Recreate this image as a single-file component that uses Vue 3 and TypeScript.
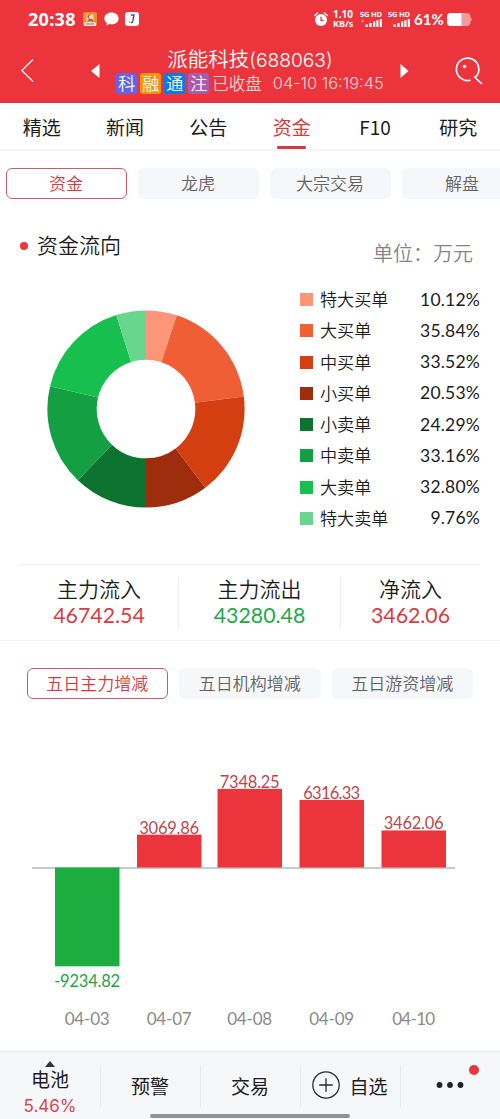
<script setup lang="ts">
interface Order { label: string; value: number; color: string }
interface Day { date: string; value: number; x: number }

const tabs = ['精选', '新闻', '公告', '资金', 'F10', '研究']
const subTabs = ['资金', '龙虎', '大宗交易', '解盘']
const badges = [
  { text: '科', tone: 'blue' },
  { text: '融', tone: 'orange' },
  { text: '通', tone: 'azure' },
  { text: '注', tone: 'violet' },
]

const orders: Order[] = [
  { label: '特大买单', value: 10.12, color: '#fd9579' },
  { label: '大买单', value: 35.84, color: '#f05e35' },
  { label: '中买单', value: 33.52, color: '#d33f11' },
  { label: '小买单', value: 20.53, color: '#9e2d0e' },
  { label: '小卖单', value: 24.29, color: '#0c7330' },
  { label: '中卖单', value: 33.16, color: '#139f42' },
  { label: '大卖单', value: 32.8, color: '#17bf4f' },
  { label: '特大卖单', value: 9.76, color: '#68d68c' },
]

const total = orders.reduce((sum, o) => sum + o.value, 0)
const point = (r: number, share: number) => {
  const a = share * Math.PI * 2
  return `${(99 + r * Math.sin(a)).toFixed(2)} ${(99 - r * Math.cos(a)).toFixed(2)}`
}
let start = 0
const slices = orders.map((o) => {
  const end = start + o.value / total
  const d = `M${point(98.6, start)}A98.6 98.6 0 0 1 ${point(98.6, end)}L${point(49.3, end)}A49.3 49.3 0 0 0 ${point(49.3, start)}Z`
  start = end
  return { d, color: o.color }
})

const summary = [
  { label: '主力流入', value: '46742.54', tone: 'up' },
  { label: '主力流出', value: '43280.48', tone: 'down' },
  { label: '净流入', value: '3462.06', tone: 'up' },
]
const ranges = ['五日主力增减', '五日机构增减', '五日游资增减']

const days: Day[] = [
  { date: '04-03', value: -9234.82, x: 55 },
  { date: '04-07', value: 3069.86, x: 137 },
  { date: '04-08', value: 7348.25, x: 217.5 },
  { date: '04-09', value: 6316.33, x: 299.5 },
  { date: '04-10', value: 3462.06, x: 381.5 },
]
const base = 167.5
const bars = days.map((d) => {
  const h = Math.abs(d.value) * 0.0107
  const up = d.value > 0
  const text = d.value.toFixed(2)
  return {
    ...d, h, up, text,
    y: up ? base - h : base,
    textY: up ? base - h - 1 : base + h + 21,
    textW: up ? (text.includes('31') ? 57 : 60) : 66,
  }
})
</script>

<template>
  <main class="screen">
    <header class="header">
      <div class="status">
        <span class="clock">20:38</span>
        <svg class="app-icon" width="14" height="14" viewBox="0 0 14 14">
          <rect width="14" height="14" rx="2" fill="#f58a32" />
          <path d="M3 2h8v8H3z" fill="#f5c47c" />
          <path d="M4 4l3-2 3 2-1 3 2 3H4l2-3z" fill="#b65a40" />
          <circle cx="8" cy="5" r="2" fill="#ffe1c0" />
          <path d="M1 11q6-3 12 0v3H1z" fill="#fff0df" />
          <path d="M3 12h8" stroke="#cc4438" />
        </svg>
        <svg class="chat-icon" width="15" height="14" viewBox="0 0 15 14">
          <path d="M7.5.5C3.4.5.4 3 .4 6.4c0 2 .9 3.6 2.5 4.7l-.5 2.5 3-1.5c5 1 9.200-1.600 9.200-5.700C14.600 3 11.600.5 7.500.5Z" fill="#fff" />
        </svg>
        <svg class="j-icon" width="14" height="14" viewBox="0 0 14 14">
          <rect width="14" height="14" rx="3" fill="#fff" />
          <path d="M6 3h3L7.800 9q-.4 2-2 1.500M4.500 9.500v1" fill="none" stroke="#8d383b" stroke-width="1.300" />
        </svg>
        <span class="spacer"></span>
        <svg class="alarm" width="14" height="15" viewBox="0 0 14 15">
          <circle cx="7" cy="8" r="6" fill="#fff" />
          <path d="M.7 3.500 3.600 1M13.300 3.500 10.400 1" stroke="#fff" stroke-width="1.400" stroke-linecap="round" />
          <path d="M7 4.800v3.500h2.700" fill="none" stroke="#eb343c" stroke-width="1.300" />
        </svg>
        <span class="speed"><span>1.10</span><span>KB/s</span></span>
        <span v-for="n in 2" :key="n" class="signal">
          <svg width="22" height="18" viewBox="0 0 22 18">
            <text x="0" y="7" textLength="22" class="net">5G HD</text>
            <path d="M5.500 14.500h2.300V17H5.500zM9.300 13h2.300v4H9.300zM13 11.500h2.300V17H13zM16.300 10.300h2.200V17h-2.200zM19.700 9h2.300v8h-2.300z" fill="#fff" />
            <path v-if="n === 1" d="M1.500 11h2.500M2.700 9.800v2.500" stroke="#f8a0a0" />
          </svg>
        </span>
        <span class="percent">61%</span>
        <svg class="battery" width="25" height="13" viewBox="0 0 25 13">
          <rect width="23.500" height="13" rx="4" fill="#f49a9d" />
          <path d="M4 0h10.500v13H4a4 4 0 0 1-4-4V4a4 4 0 0 1 4-4Z" fill="#fff" />
          <path d="M23.300 4.300c2 .8 2 3.600 0 4.400z" fill="#f49a9d" />
        </svg>
      </div>
      <div class="title-row">
        <svg class="back" width="15" height="25" viewBox="0 0 15 25"><path d="M13 1.500 1.800 12.500 13 23.500" fill="none" stroke="#fff" stroke-width="1.300" /></svg>
        <svg class="prev" width="9" height="14" viewBox="0 0 9 14"><path d="M8.500 0v14L0 7z" fill="#fff" /></svg>
        <div class="stock">
          <h1>派能科技<span>(688063)</span></h1>
          <div class="meta">
            <i v-for="b in badges" :key="b.text" class="badge" :class="b.tone">{{ b.text }}</i>
            <span class="closed">已收盘</span><time>04-10 16:19:45</time>
          </div>
        </div>
        <svg class="next" width="9" height="14" viewBox="0 0 9 14"><path d="M.5 0v14L8.500 7z" fill="#fff" /></svg>
        <svg class="search" width="28" height="29" viewBox="0 0 28 29">
          <path d="M15.500 23.200A11.200 11.200 0 1 1 20.200 20.600M19 19.500 27 27" fill="none" stroke="#fff" stroke-width="1.700" />
          <circle cx="9.500" cy="9.500" r="1.800" fill="#fff" />
        </svg>
      </div>
    </header>

    <nav class="tabs">
      <span v-for="t in tabs" :key="t" :class="{ active: t === '资金' }">{{ t }}</span>
    </nav>
    <nav class="sub-tabs">
      <span v-for="(t, i) in subTabs" :key="t" class="pill" :class="{ selected: i === 0 }">{{ t }}</span>
    </nav>

    <section class="flow">
      <div class="flow-head">
        <b class="dot"></b><h2>资金流向</h2><span class="unit">单位：万元</span>
      </div>
      <div class="flow-body">
        <svg class="donut" width="198" height="198" viewBox="0 0 198 198">
          <path v-for="s in slices" :key="s.color" :d="s.d" :fill="s.color" />
        </svg>
        <ul class="legend">
          <li v-for="o in orders" :key="o.label">
            <svg width="13" height="13"><rect width="13" height="13" :fill="o.color" /></svg>
            <span>{{ o.label }}</span><em>{{ o.value.toFixed(2) }}%</em>
          </li>
        </ul>
      </div>
    </section>

    <section class="summary">
      <div class="totals">
        <div v-for="s in summary" :key="s.label">
          <span>{{ s.label }}</span><strong :class="s.tone">{{ s.value }}</strong>
        </div>
      </div>
    </section>

    <nav class="ranges">
      <span v-for="(r, i) in ranges" :key="r" class="pill" :class="{ selected: i === 0 }">{{ r }}</span>
    </nav>
    <svg class="chart" width="500" height="352" viewBox="0 -1 500 352">
      <path d="M32 168H455" stroke="#b9b9b9" stroke-width="1.300" />
      <g v-for="b in bars" :key="b.date" text-anchor="middle">
        <rect :x="b.x" :y="b.y" width="64.500" :height="b.h" :fill="b.up ? '#eb343c' : '#1bad40'" />
        <text :x="b.x + 32.200" :y="b.textY" :textLength="b.textW" class="amount" :class="b.up ? 'rise' : 'fall'">{{ b.text }}</text>
        <text :x="b.x + 32.200" y="324.500" :textLength="b.date === '04-10' ? 43 : 45" class="date">{{ b.date }}</text>
      </g>
    </svg>

    <footer class="bottom">
      <div class="cell sector">
        <svg width="10" height="6" viewBox="0 0 10 6"><path d="M0 6 5 0l5 6z" fill="#333" /></svg>
        <span>电池</span><strong>5.46%</strong>
      </div>
      <div class="cell">预警</div>
      <div class="cell">交易</div>
      <div class="cell add">
        <svg width="28" height="28" viewBox="0 0 28 28"><circle cx="14" cy="14" r="13.200" /><path d="M14 7.200v13.600M7.200 14h13.600" /></svg>
        <span>自选</span>
      </div>
      <div class="cell more">
        <svg width="28" height="6" viewBox="0 0 28 6"><circle cx="3.500" cy="3" r="2.900" /><circle cx="14" cy="3" r="2.900" /><circle cx="24.500" cy="3" r="2.900" /></svg>
        <b class="notice"></b>
      </div>
      <i class="home-bar"></i>
    </footer>
  </main>
</template>

<style>
body { margin: 0; background: #fff; }
</style>

<style scoped>
* { box-sizing: border-box; }
svg { display: block; flex: none; }
.screen { width: 500px; height: 1119px; overflow: hidden; background: #fff; color: #1c1c1c; font-family: "Noto Sans CJK SC", sans-serif; font-weight: 350; }
h1, h2, ul { margin: 0; padding: 0; font-weight: 350; }
i, em { font-style: normal; }
.spacer { flex: 1; }
.header { height: 103px; background: #eb343c; color: #fff; border-bottom: 1px solid #d9363e; }
.status { display: flex; align-items: center; height: 38px; padding: 0 28px; }
.clock { width: 49px; margin-right: 6px; font: 700 18px/38px "Noto Sans", sans-serif; letter-spacing: .3px; white-space: nowrap; }
.app-icon { margin-right: 7px; }
.chat-icon { margin-right: 6px; }
.alarm { margin-right: 5px; }
.speed { display: flex; flex-direction: column; width: 22px; margin-right: 5px; font: 700 9px/10px "Noto Sans", sans-serif; white-space: nowrap; }
.speed span:first-child { font-size: 10px; }
.signal { margin-right: 4px; }
.signal:nth-of-type(4) { margin-right: 6px; }
.net { font: 700 7.500px "Noto Sans", sans-serif; fill: #fff; }
.percent { width: 30px; margin-right: 3px; font: 700 15px/41px Lato, sans-serif; white-space: nowrap; }
.battery { margin-top: 1px; }
.title-row { display: flex; height: 64px; padding: 0 17px 0 20px; }
.back { margin-top: 20px; }
.prev { margin: 26px 0 0 56px; }
.stock { width: 300px; display: flex; flex-direction: column; align-items: center; }
h1 { margin-top: 7px; font-size: 20.500px; line-height: 26px; white-space: nowrap; }
h1 span { font-family: Inter, sans-serif; font-size: 19.200px; font-weight: 350; }
.meta { display: flex; align-items: center; height: 22px; margin-top: -1px; white-space: nowrap; }
.badge { width: 21px; height: 21px; margin-right: 3px; border-radius: 3px; font-size: 17px; line-height: 20px; text-align: center; }
.blue { background: #6663e8; } .orange { background: #f1940c; } .azure { background: #087be9; } .violet { background: #aa5bb0; }
.closed { color: #ffd4d4; font-size: 16.500px; line-height: 20px; margin: -1px 0 0 0; }
time { color: #ffd4d4; margin-left: 11px; font: 350 16.400px/22px Inter, sans-serif; }
.next { margin: 26px 0 0 0; }
.search { margin: 19px 0 0 auto; }
.tabs { display: grid; grid-template-columns: repeat(6, 83.333px); height: 48px; border-bottom: 2px solid #f3f4f5; font-size: 19px; font-weight: 400; line-height: 48px; text-align: center; }
.tabs span { display: flex; flex-direction: column; align-items: center; height: 46px; }
.tabs .active { color: #d93841; }
.active::after { content: ""; width: 29px; height: 3px; margin-top: -5px; flex: none; border-radius: 1px; background: #d23b46; }
.sub-tabs { display: flex; gap: 11px; padding: 17px 0 0 5.500px; }
.pill { flex: none; width: 121px; height: 31px; border-radius: 6px; background: #f6f7f9; color: #626466; font-size: 17px; line-height: 29px; text-align: center; white-space: nowrap; }
.pill.selected { border: 1px solid #c65d68; background: #fff; color: #d63942; line-height: 27px; }
.flow { height: 365px; }
.flow-head { display: flex; align-items: center; height: 80px; padding: 13px 27px 0 20px; }
.dot { width: 8px; height: 8px; margin-right: 9px; border-radius: 50%; background: #eb343c; }
h2 { margin-top: -3px; font-size: 21px; line-height: 30px; }
.unit { margin: 14px 0 0 auto; color: #858585; font-size: 20px; line-height: 30px; }
.flow-body { display: flex; padding: 0 20px 0 47.400px; }
.donut { margin-top: 31px; }
.legend { width: 180px; margin: 5px 0 0 auto; list-style: none; }
.legend li { display: flex; align-items: center; height: 31.250px; font-size: 17.100px; }
.legend li span { margin: -2px 0 0 7px; }
em { margin-left: auto; font: 17.500px/30px Lato, sans-serif; letter-spacing: .2px; }
.summary { height: 77px; padding: 0 20px; border-bottom: 1px solid #f0f1f2; }
.totals { display: grid; grid-template-columns: 158px 162px 140px; border-top: 1px solid #eeeff0; padding-top: 12px; }
.totals div { display: flex; flex-direction: column; align-items: center; height: 51px; font-size: 21px; line-height: 23px; }
.totals div + div { border-left: 1px solid #ebecee; }
.totals strong { margin-top: 2px; font: 400 21.300px/26px Lato, sans-serif; }
.up { color: #d93a45; } .down { color: #1ea949; }
.ranges { display: flex; gap: 11px; padding: 27px 0 0 26.500px; }
.ranges .pill { width: 141.500px; }
.chart { font-family: Lato, sans-serif; font-weight: 400; }
.amount { font-size: 16.500px; } .rise { fill: #bd4650; } .fall { fill: #1ba543; }
.date { font-size: 17px; fill: #8a8a8a; }
.bottom { position: relative; display: grid; grid-template-columns: repeat(5, 100px); height: 68px; border-top: 1px solid #e6e7e8; background: #f6f7f9; font-size: 19px; font-weight: 400; }
.cell { display: flex; align-items: center; justify-content: center; height: 66px; position: relative; }
.cell:nth-child(-n+4)::after { content: ""; position: absolute; right: -1px; top: 13px; height: 43px; width: 1px; background: #e9ebee; }
.sector { flex-direction: column; justify-content: flex-start; padding-top: 9px; }
.sector span { line-height: 24px; }
.sector strong { color: #d64550; font: 400 17px/30px Inter, sans-serif; }
.add span { margin-left: 9px; }
.add svg { fill: none; stroke: #292b2e; stroke-width: 1.300; }
.more svg { fill: #222; }
.notice { position: absolute; left: 69px; top: 13px; width: 10px; height: 10px; border-radius: 50%; background: #eb343c; }
.home-bar { position: absolute; left: 150px; top: 62px; width: 200px; height: 4px; border-radius: 2px; background: #919294; }
</style>
